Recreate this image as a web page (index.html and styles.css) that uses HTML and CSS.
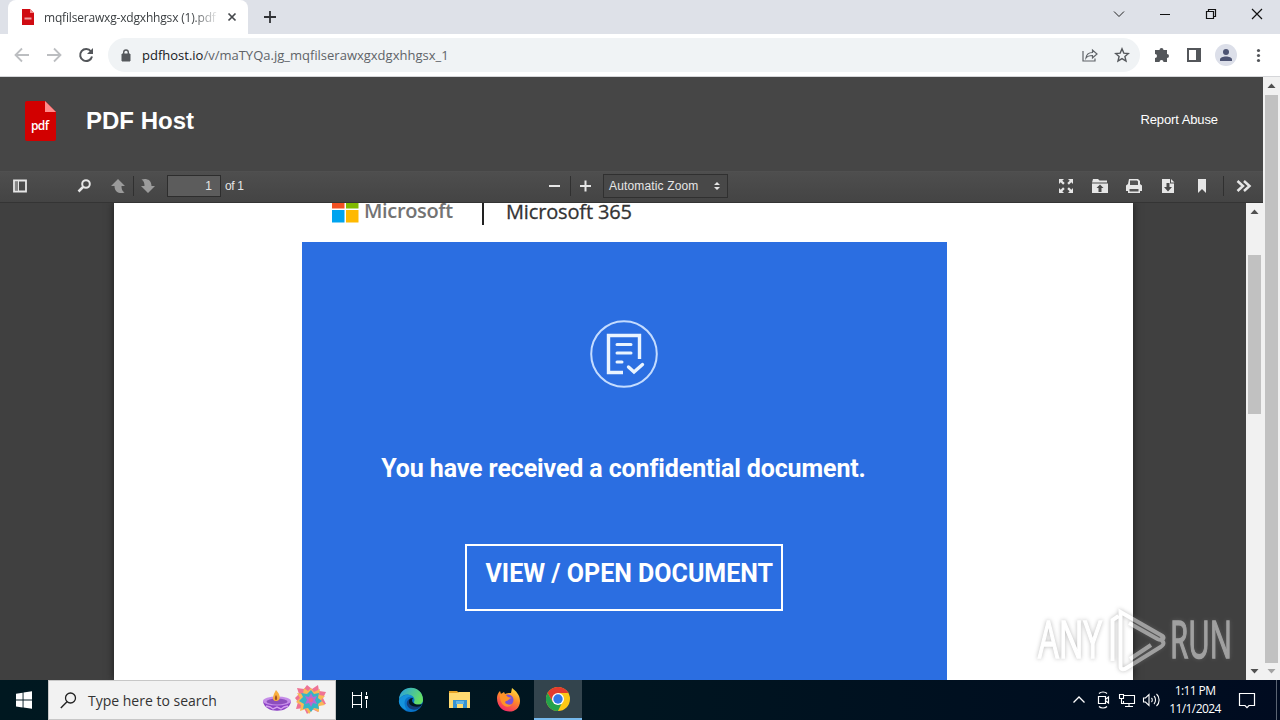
FILE: index.html
```html
<!DOCTYPE html>
<html lang="en">

<head>
    <meta charset="UTF-8">
    <title>PDF Host</title>
    <link rel="stylesheet" href="styles.css">
</head>

<body>
    <!-- Browser tabs -->
    <div class="tabstrip">
        <div class="tab">
            <svg class="favicon" width="14" height="16" viewBox="0 0 14 16">
                <path d="M1 0h8l4 4v12H1z" fill="#d00b12"/>
                <path d="M9 0l4 4H9z" fill="#f58b8b"/>
                <path d="M3.500 8.500h7v2h-7z" fill="#fff" opacity=".6"/>
            </svg>
            <span class="tab-title">mqfilserawxg-xdgxhhgsx (1).pdf</span>
            <svg width="10" height="10" viewBox="0 0 10 10"><path d="M1.500 1.500l7 7m0-7l-7 7" stroke="#45484c" stroke-width="1.700"/></svg>
        </div>
        <svg class="new-tab" width="12" height="12" viewBox="0 0 12 12"><path d="M6 0v12M0 6h12" stroke="#303236" stroke-width="1.800"/></svg>
        <div class="window-buttons">
            <svg width="46" height="28" viewBox="0 0 46 28"><path d="M18 11.500l5 5 5-5" stroke="#222" fill="none"/></svg>
            <svg width="46" height="28" viewBox="0 0 46 28"><path d="M18 14.500h10" stroke="#111"/></svg>
            <svg width="46" height="28" viewBox="0 0 46 28"><path d="M18.500 11.500h7v7h-7zM20.500 11V9.500h7v7H26" stroke="#111" stroke-width="1.200" fill="none"/></svg>
            <svg width="46" height="28" viewBox="0 0 46 28"><path d="M18 9l10 10m0-10L18 19" stroke="#111" stroke-width="1.200"/></svg>
        </div>
    </div>

    <!-- Address bar -->
    <div class="navbar">
        <svg width="32" height="20" viewBox="0 0 32 20"><path d="M29 10H16m6-6.500L15.500 10l6.500 6.500" stroke="#bcbec1" stroke-width="1.800" fill="none"/></svg>
        <svg width="32" height="20" viewBox="0 0 32 20"><path d="M15 10h13m-6-6.500l6.500 6.500-6.500 6.500" stroke="#bcbec1" stroke-width="1.800" fill="none"/></svg>
        <svg width="32" height="20" viewBox="0 0 32 20"><path d="M27 6.500A6 6 0 1 0 28 11.500" stroke="#53565a" stroke-width="2" fill="none"/><path d="M29 3v6h-6z" fill="#53565a"/></svg>
        <div class="omnibox">
            <svg width="10" height="13" viewBox="0 0 10 13"><path d="M1 5h8v7H1z" fill="#55585c" stroke="#55585c"/><path d="M2.700 5V3.300a2.300 2.300 0 0 1 4.600 0V5" stroke="#55585c" stroke-width="1.400" fill="none"/></svg>
            <span class="url"><b>pdfhost.io</b>/v/maTYQa.jg_mqfilserawxgxdgxhhgsx_1</span>
            <svg class="share" width="18" height="18" viewBox="0 0 18 18"><path d="M2 5v10h12v-2.500M5 12c.5-4 3-5.500 6.500-5.500V4l4.500 4-4.500 4V9.500C8.500 9.500 6.500 10 5 12z" stroke="#5f6368" stroke-width="1.200" fill="none"/></svg>
            <svg width="16" height="16" viewBox="0 0 16 16"><path d="M8 1.800l1.800 4.300 4.600.4-3.500 3 1.100 4.600-4-2.500-4 2.500 1.100-4.600-3.500-3 4.600-.4z" stroke="#55585c" stroke-width="1.400" fill="none"/></svg>
        </div>
        <div class="extensions">
            <svg width="32" height="22" viewBox="0 0 32 22"><path d="M10 6h3.500a2 2 0 1 1 4 0H21v4a2 2 0 1 1 0 4v4h-3.500a2 2 0 0 0-4 0H9V14a2 2 0 0 0 0-4V6z" fill="#53565a"/></svg>
            <svg width="32" height="22" viewBox="0 0 32 22"><path d="M9 4h14v14H9z" fill="#53565a"/><path d="M11 6h7v10h-7z" fill="#fff"/></svg>
            <svg width="32" height="22" viewBox="0 0 32 22"><circle cx="16" cy="11" r="11" fill="#dcdfe9"/><circle cx="16" cy="8" r="3" fill="#4d5473"/><path d="M10 17v-1.500c0-4 12-4 12 0V17z" fill="#4d5473"/></svg>
            <svg width="32" height="22" viewBox="0 0 32 22" fill="#53565a"><circle cx="16.500" cy="6.500" r="1.600"/><circle cx="16.500" cy="11.500" r="1.600"/><circle cx="16.500" cy="16.500" r="1.600"/></svg>
        </div>
    </div>

    <!-- Web page -->
    <div class="content">
        <div class="site">
            <header class="site-header">
                <svg width="32" height="41" viewBox="0 0 32 41">
                    <path d="M2 0h18l11 11v27a2 2 0 0 1-2 2H2a2 2 0 0 1-2-2V2a2 2 0 0 1 2-2z" fill="#d20000"/>
                    <path d="M20 0l11 11H20z" fill="#ff8c8c"/>
                    <text x="6" y="28.500" textLength="18" class="logo-text">pdf</text>
                </svg>
                <h1>PDF Host</h1>
                <a class="report">Report Abuse</a>
            </header>

            <div class="toolbar">
                <div class="tools-left">
                    <svg class="sidebar-toggle" width="40" height="16" viewBox="0 0 40 16"><path d="M14 2.500h12v11H14z" stroke="#e6e6e6" stroke-width="1.800" fill="none"/><path d="M15 4h3.500v8H15z" fill="#858585"/><path d="M18.500 3v10" stroke="#e6e6e6" stroke-width="1"/></svg>
                    <svg width="34" height="16" viewBox="0 0 34 16"><circle cx="19" cy="6" r="3.800" stroke="#e6e6e6" stroke-width="2" fill="none"/><path d="M16 9l-4.500 4.500" stroke="#e6e6e6" stroke-width="2.500"/></svg>
                    <svg width="32" height="16" viewBox="0 0 32 16"><path d="M17 1l7 7h-3.500c0 3 .5 5 3 6.500-4 1.500-10 .5-10-6.500H10z" fill="#9b9b9b"/></svg>
                    <i class="separator"></i>
                    <svg width="32" height="16" viewBox="3 0 32 16"><path d="M17 15l7-7h-3.500c0-7-6-8-10-6.500 2.500 1.500 3 3.500 3 6.500H10z" fill="#9b9b9b"/></svg>
                    <span class="page-number">1</span>
                    <span class="page-count">of 1</span>
                </div>
                <svg width="32" height="16" viewBox="0 0 32 16"><path d="M11 8h11" stroke="#e6e6e6" stroke-width="2"/></svg>
                <i class="separator"></i>
                <svg width="30" height="16" viewBox="0 0 30 16"><path d="M9 8h11M14.500 2.500v11" stroke="#e6e6e6" stroke-width="2"/></svg>
                <div class="zoom">
                    <span>Automatic Zoom</span>
                    <svg width="6" height="10" viewBox="0 0 6 10" fill="#e6e6e6"><path d="M3 1l3 3H0zM3 9l3-3H0z"/></svg>
                </div>
                <div class="tools-right">
                    <svg width="34" height="16" viewBox="0 0 34 16" fill="#e6e6e6"><path d="M10 1h5l-1.700 1.700 2.400 2.400-1.600 1.600-2.400-2.400L10 6zM24 1v5l-1.700-1.700-2.400 2.400-1.600-1.600 2.400-2.400L19 1zM10 15v-5l1.700 1.700 2.400-2.400 1.600 1.600-2.400 2.400L15 15zM24 15h-5l1.700-1.700-2.400-2.400 1.600-1.600 2.400 2.400L24 10z"/></svg>
                    <svg width="34" height="16" viewBox="0 0 34 16"><path d="M10 1h5l1.500 1.500H24v2H9zM9 5.500h16V15H9z" fill="#e6e6e6"/><path d="M17 6.500l3.500 3.500h-2v4h-3v-4h-2z" fill="#484848"/></svg>
                    <svg width="34" height="16" viewBox="0 0 34 16"><path d="M12 1h9l2 2v3l2 1.500V13h-2v2H11v-2H9V7.500L11 6z" fill="#e6e6e6"/><path d="M13 2.500h7l1 1V7h-8zM12.500 11h9v2.500h-9z" fill="#535353"/></svg>
                    <svg width="34" height="16" viewBox="0 0 34 16"><path d="M11 1h8v4.500h4V15H11z" fill="#e6e6e6"/><path d="M20 1l3.500 3.500H20z" fill="#e6e6e6"/><path d="M15.500 5h3v4h2.500l-4 4.500-4-4.500h2.500z" fill="#484848"/></svg>
                    <svg width="34" height="16" viewBox="0 0 34 16"><path d="M13 1h8v14l-4-4-4 4z" fill="#e6e6e6"/></svg>
                    <i class="separator"></i>
                    <svg width="34" height="16" viewBox="0 0 34 16"><path d="M10.500 3l5.500 5-5.500 5m6.500-10l5.500 5-5.500 5" stroke="#e6e6e6" stroke-width="2.500" fill="none"/></svg>
                </div>
            </div>

            <div class="viewer">
                <div class="canvas">
                    <div class="page">
                        <div class="brand">
                            <svg width="27" height="27" viewBox="0 0 27 27">
                                <path d="M0 0h12.500v12.500H0z" fill="#f25022"/>
                                <path d="M14 0h12.500v12.500H14z" fill="#7fba00"/>
                                <path d="M0 14h12.500v12.500H0z" fill="#00a4ef"/>
                                <path d="M14 14h12.500v12.500H14z" fill="#ffb900"/>
                            </svg>
                            <span class="brand-name">Microsoft</span>
                            <i class="brand-line"></i>
                            <span class="product">Microsoft 365</span>
                        </div>
                        <div class="hero">
                            <svg width="68" height="68" viewBox="0 0 68 68" fill="none" stroke="#fff">
                                <circle cx="34" cy="34" r="32.800" stroke="#c4dcff" stroke-width="2"/>
                                <path d="M33 52.500H18.500v-37h31V39" stroke="#eaf4ff" stroke-width="3.400"/>
                                <path d="M27 24.500h14M27 33h14M27 42h5" stroke="#eaf4ff" stroke-width="3" stroke-linecap="round"/>
                                <path d="M38.500 47l5.500 5 8.500-7.500" stroke="#eaf4ff" stroke-width="3.400" stroke-linecap="round"/>
                            </svg>
                            <p>You have received a confidential document.</p>
                            <a class="open-button">VIEW / OPEN DOCUMENT</a>
                        </div>
                    </div>
                </div>
                <div class="scrollbar inner">
                    <svg width="17" height="17" viewBox="0 0 17 17"><path d="M4.500 11h8l-4-4.500z" fill="#505050"/></svg>
                    <i class="thumb"></i>
                    <svg width="17" height="17" viewBox="0 0 17 17"><path d="M4.500 6h8l-4 4.500z" fill="#505050"/></svg>
                </div>
            </div>
        </div>
        <div class="scrollbar outer">
            <svg width="17" height="17" viewBox="0 0 17 17"><path d="M4.500 11h8l-4-4.500z" fill="#505050"/></svg>
            <i class="thumb"></i>
            <svg width="17" height="17" viewBox="0 0 17 17"><path d="M4.500 6h8l-4 4.500z" fill="#a3a3a3"/></svg>
        </div>

        <!-- Watermark over the page -->
        <svg class="watermark" width="204" height="72" viewBox="0 0 204 72">
            <text x="6" y="53" textLength="64" lengthAdjust="spacingAndGlyphs">ANY</text>
            <text x="138" y="53" textLength="62" lengthAdjust="spacingAndGlyphs">RUN</text>
            <path d="M80.500 56V15l6-4M88.500 53V7l42 24c3 2-1 5-5 3L97 18M88.500 53v8c0 4 3 4 6 2l34-21c5-3 3-6-1-8M98 54l21-14" fill="none"/>
        </svg>
    </div>

    <!-- Windows taskbar -->
    <div class="taskbar">
        <svg width="48" height="40" viewBox="0 0 48 40"><path d="M16 13.700l6.600-1v6.900H16zM23.500 12.500l8.500-1.200v8.300h-8.500zM16 20.500h6.600v6.900l-6.600-1zM23.500 20.500H32v8.300l-8.500-1.200z" fill="#fff"/></svg>
        <div class="search">
            <svg width="17" height="17" viewBox="0 0 17 17"><circle cx="10.500" cy="6" r="5" stroke="#222" stroke-width="1.300" fill="none"/><path d="M7 9.700L.8 16" stroke="#222" stroke-width="1.400"/></svg>
            <span>Type here to search</span>
            <svg width="28" height="24" viewBox="0 0 28 24">
                <path d="M0 13c1 13 27 13 28 0z" fill="#8c42c5"/>
                <ellipse cx="14" cy="13" rx="14" ry="4.500" fill="#c58de8"/>
                <ellipse cx="14" cy="13.500" rx="10.500" ry="3" fill="#8d4fbd"/>
                <path d="M3 18l4 1 3 2 4-2 4 2 3-2 4-1" stroke="#d5a0ef" stroke-width="1.500" fill="none"/>
                <path d="M13 2c5 5 5 11 0 11s-3-6 0-11z" fill="#f9ae3e"/>
                <path d="M13 7c2 3 1 5 0 5s-2-2 0-5z" fill="#a55321"/>
            </svg>
            <svg width="32" height="32" viewBox="-16 -16 32 32">
                <path d="M-4-15l5 4 6-4 1 6 7 1-3 6 3 6-7 1-1 7-6-3-5 5-3-6-8 1 2-7-3-4 4-4-2-6 7 1z" fill="#ef7394"/>
                <path d="M0-12l3 4 6-3-1 6 6 1-4 4 4 5-6 1v6l-6-3-4 5-3-5-6 2 1-6-5-3 4-4-3-5 6 1 1-6 4 3z" fill="#f9b857"/>
                <path d="M0-10l3 4 5-1-1 5 4 3-4 3 1 5-5-1-3 4-3-4-5 1 1-5-5-3 4-4-2-4 6 1z" fill="#35b5c6"/>
                <path d="M0-7l2 4 4-1-2 4 2 4-4-1-2 4-2-4-4 1 2-4-2-4 4 1z" fill="#b86ad2"/>
                <circle r="2.200" fill="#ef638e"/>
            </svg>
        </div>
        <svg width="48" height="40" viewBox="0 0 48 40"><path d="M16.500 12v3.500h9V12M16.500 28v-3.500h9V28M16.500 15v10M25.500 15v10M30.500 12v3M30.500 20v8" stroke="#fff" fill="none"/><path d="M29 16h3v3h-3z" fill="#fff"/></svg>
        <svg width="54" height="40" viewBox="0 0 54 40">
            <defs>
                <linearGradient id="edgeTop" x2="1" y2=".4"><stop stop-color="#259ce4"/><stop offset="1" stop-color="#65df65"/></linearGradient>
            </defs>
            <circle cx="27" cy="20" r="12" fill="#0873c9"/>
            <path d="M15 19C17 3 39 5 39 20c0 6-10 6-9 2 3-6-8-12-15-3z" fill="url(#edgeTop)"/>
            <path d="M29 18c-4 2-4 9 8 8-3 5-12 5-14-1-1-4 2-7 6-7z" fill="#143d79"/>
            <path d="M15 20c4-7 12-6 14-3-8-2-11 6-6 13-5-1-9-6-8-10z" fill="#1593dc"/>
            <path d="M29 18c-3 4 2 8 9 6l-1 2c-7 2-13-1-12-5 0-2 2-3 4-3z" fill="#001820"/>
        </svg>
        <svg width="44" height="40" viewBox="0 0 44 40">
            <path d="M11 11h8l2 2h11v15H11z" fill="#e6a427"/>
            <path d="M11 13h8l2-1h11v16H11z" fill="#ffda71"/>
            <path d="M15 20h14v8h-4v-4h-6v4h-4z" fill="#3892d0"/>
            <path d="M18 21h8v3h-8z" fill="#64b4e3"/>
        </svg>
        <svg width="52" height="40" viewBox="1 0 52 40">
            <defs>
                <linearGradient id="fox" x1=".8" x2=".3" y2="1"><stop stop-color="#ffe43f"/><stop offset=".45" stop-color="#ff8a29"/><stop offset="1" stop-color="#f4256b"/></linearGradient>
            </defs>
            <path d="M16 18c0-3 1-5 3-7l1 3 3-2 1 2c2-1 4-1 6-1l1-5c4 3 8 7 8 13 0 15-23 14-23-3z" fill="url(#fox)"/>
            <circle cx="27" cy="20" r="5.500" fill="#7952d7"/>
            <path d="M19 14c4-1 6 1 8 3l4 1c-3 0-3 3-6 3-3 2 2 5 6 3-4 6-13 2-12-10z" fill="#ff9329"/>
        </svg>
        <div class="active">
            <svg width="24" height="24" viewBox="0 0 24 24">
                <circle cx="12" cy="12" r="12" fill="#fdc817"/>
                <path d="M1.600 6A12 12 0 0 1 22.400 6H12l-5.200 9z" fill="#e33b2e"/>
                <path d="M1.600 6l5.200 9 9.600 0L12 24A12 12 0 0 1 1.600 6z" fill="#24a24b"/>
                <circle cx="12" cy="12" r="6" fill="#fff"/>
                <circle cx="12" cy="12" r="4.700" fill="#3277e6"/>
            </svg>
        </div>
        <div class="tray">
            <svg width="24" height="24" viewBox="0 0 24 24"><path d="M6.500 14.500L12 9l5.500 5.500" stroke="#fff" stroke-width="1.300" fill="none"/></svg>
            <svg width="24" height="24" viewBox="0 0 24 24"><path d="M7.500 8.500h7v7h-7zM15 11l2.500-2v6L15 13M8 5.500c2-2 6-2 8 0M8 18.500c2 2 6 2 8 0" stroke="#fff" stroke-width="1.200" fill="none"/></svg>
            <svg width="24" height="24" viewBox="0 0 24 24"><path d="M9 7.500h10.500v8H8.500V13M14 16v2.500M10 18.500h8M4.500 6.500h4v4h-4zM6.500 11v4.500H8" stroke="#fff" stroke-width="1.100" fill="none"/></svg>
            <svg width="24" height="24" viewBox="0 0 24 24"><path d="M4.500 10h2L10 6.500v11L6.500 14h-2zM12.500 10c1 1 1 3 0 4M15 8c2 2 2 6 0 8M17.500 6c3.500 3 3.500 9 0 12" stroke="#fff" stroke-width="1.100" fill="none"/></svg>
            <div class="clock"><span>1:11 PM</span><span>11/1/2024</span></div>
            <svg class="notes" width="18" height="18" viewBox="0 0 18 18"><path d="M1.500 2.500h15v12H11l-2 2.200-2-2.200H1.500z" stroke="#fff" stroke-width="1.200" fill="none"/></svg>
        </div>
    </div>
</body>

</html>
```
FILE: styles.css
```css
* {
    box-sizing: border-box;
}

body {
    display: flex;
    flex-direction: column;
    width: 1280px;
    height: 720px;
    margin: 0;
    overflow: hidden;
    font-family: 'Open Sans', sans-serif;
    background-color: #fff;
}

svg {
    display: block;
    flex-shrink: 0;
}

/* Tabs */
.tabstrip {
    display: flex;
    height: 34px;
    padding-left: 8px;
    background-color: #dee1e8;
}

.tab {
    display: flex;
    align-items: center;
    width: 240px;
    padding: 0 11px 0 13px;
    border-radius: 8px 8px 0 0;
    background-color: #fff;
}

.tab-title {
    width: 173px;
    margin: 0 10px 0 9px;
    font-size: 12px;
    letter-spacing: -0.18px;
    white-space: nowrap;
    color: #3c4043;
    -webkit-mask-image: linear-gradient(to right, #000 148px, transparent 176px);
    mask-image: linear-gradient(to right, #000 148px, transparent 176px);
}

.new-tab {
    margin: 11px 0 0 16px;
}

.window-buttons {
    display: flex;
    margin-left: auto;
}

/* Address bar */
.navbar {
    display: flex;
    align-items: center;
    height: 43px;
    border-bottom: 1px solid #d5d6d9;
    background-color: #fff;
}

.omnibox {
    display: flex;
    align-items: center;
    width: 1032px;
    height: 34px;
    margin-left: 12px;
    padding: 0 10px 0 13px;
    border-radius: 17px;
    background-color: #f0f3f5;
}

.url {
    margin-left: 11px;
    font-size: 13px;
    color: #5f6368;
}

.url b {
    font-weight: normal;
    color: #17191c;
}

.share {
    margin: 0 15px 0 auto;
}

.extensions {
    display: flex;
    margin-left: 6px;
}

/* Web page */
.content {
    position: relative;
    display: flex;
    height: 603px;
}

.site {
    width: 1263px;
    background-color: #464646;
}

.site-header {
    display: flex;
    align-items: center;
    height: 94px;
    padding: 0 45px 6px 25px;
    font-family: 'Liberation Sans', sans-serif;
    color: #fff;
}

h1 {
    margin: 0 0 0 29px;
    font-size: 24px;
}

.logo-text {
    font: 600 12px 'Open Sans', sans-serif;
    fill: #fff;
}

.report {
    margin: 0 0 4px auto;
    font-size: 13px;
    letter-spacing: -0.1px;
}

.toolbar {
    display: flex;
    align-items: center;
    height: 32px;
    padding-bottom: 2px;
    border-top: 1px solid #505050;
    border-bottom: 1px solid #343434;
    background: linear-gradient(#4e4e4e, #444);
    font-family: 'Liberation Sans', sans-serif;
    font-size: 12px;
    color: #e6e6e6;
}

.tools-left {
    display: flex;
    align-items: center;
    width: 538px;
}

.sidebar-toggle {
    margin-right: 27px;
}

.page-number {
    width: 54px;
    height: 22px;
    margin: 0 4px 0 1px;
    padding-right: 8px;
    border: 1px solid #2d2d2d;
    background-color: #5c5c5c;
    line-height: 20px;
    text-align: right;
}

.page-count {
    letter-spacing: -0.4px;
}

.separator {
    width: 1px;
    height: 20px;
    background-color: #303030;
}

.zoom {
    display: flex;
    align-items: center;
    justify-content: space-between;
    width: 125px;
    height: 24px;
    margin-left: 2px;
    padding: 0 7px 0 5px;
    border: 1px solid #303030;
    background-color: #484848;
}

.zoom span {
    letter-spacing: 0.15px;
}

.tools-right {
    display: flex;
    align-items: center;
    margin-left: auto;
    padding-right: 2px;
}

.tools-right .separator {
    margin: 0 3px 0 4px;
}

.viewer {
    display: flex;
    height: 477px;
}

.canvas {
    width: 1246px;
    padding-left: 114px;
    overflow: hidden;
    background-color: #404040;
}

.page {
    width: 1019px;
    height: 477px;
    background-color: #fff;
    box-shadow: 0 0 8px #1b1b1b;
}

.brand {
    display: flex;
    align-items: center;
    height: 39px;
    padding: 0 0 26px 218px;
}

.brand-name {
    width: 91px;
    margin: 2px 0 0 5px;
    font-size: 20px;
    font-weight: 600;
    line-height: 24px;
    letter-spacing: -0.35px;
    color: #737373;
}

.brand-line {
    width: 2px;
    height: 30px;
    margin-left: 27px;
    background-color: #222;
}

.product {
    margin: 5px 0 0 22px;
    font-size: 20px;
    line-height: 24px;
    letter-spacing: -0.15px;
    color: #333;
    -webkit-text-stroke: 0.3px #333;
}

.hero {
    display: flex;
    flex-direction: column;
    align-items: center;
    width: 645px;
    height: 438px;
    margin-left: 188px;
    padding: 78px 2px 0 0;
    background-color: #2b6ee1;
    font-family: Roboto, sans-serif;
    font-weight: bold;
    color: #fff;
}

.hero p {
    margin: 65px 0 59px;
    font-size: 25px;
    line-height: 32px;
    letter-spacing: -0.12px;
    white-space: nowrap;
}

.open-button {
    width: 318px;
    height: 67px;
    padding-left: 19px;
    border: 2px solid #fff;
    font-size: 25px;
    line-height: 56px;
    white-space: nowrap;
}

/* Scrollbars */
.scrollbar {
    display: flex;
    flex-direction: column;
    width: 17px;
    background-color: #f1f1f1;
}

.thumb {
    width: 13px;
    margin: 0 auto;
    background-color: #c1c1c1;
}

.inner .thumb {
    height: 159px;
    margin-top: 35px;
    margin-bottom: auto;
}

.outer .thumb {
    flex: 1;
    margin-top: 1px;
}

.watermark {
    position: absolute;
    left: 1032px;
    top: 528px;
    font: 51px 'Open Sans', sans-serif;
    fill: #fff;
    stroke: #fff;
    stroke-width: 1.5px;
    opacity: 0.5;
    filter: drop-shadow(0 0 2px #777);
}

.watermark path {
    stroke-width: 4px;
}

/* Taskbar */
.taskbar {
    display: flex;
    height: 40px;
    background: linear-gradient(to right, #001820, #001520 50%, #000b20);
}

.search {
    display: flex;
    align-items: center;
    width: 288px;
    padding: 0 8px 0 11px;
    border: 1px solid #c7c7c7;
    background-color: #f2f2f2;
}

.search span {
    width: 178px;
    margin-left: 11px;
    font-size: 14px;
    color: #333;
}

.search svg:last-child {
    margin-left: 4px;
}

.active {
    display: flex;
    align-items: center;
    justify-content: center;
    width: 48px;
    border-bottom: 2px solid #76b9ed;
    background-color: #33444d;
}

.tray {
    display: flex;
    align-items: center;
    width: 210px;
    margin-left: auto;
    margin-right: 3px;
    border-right: 1px solid #5a6472;
}

.clock {
    display: flex;
    flex-direction: column;
    width: 64px;
    font-size: 12px;
    line-height: 18px;
    letter-spacing: -0.6px;
    text-align: center;
    color: #fff;
}

.notes {
    margin-left: 11px;
}
```
